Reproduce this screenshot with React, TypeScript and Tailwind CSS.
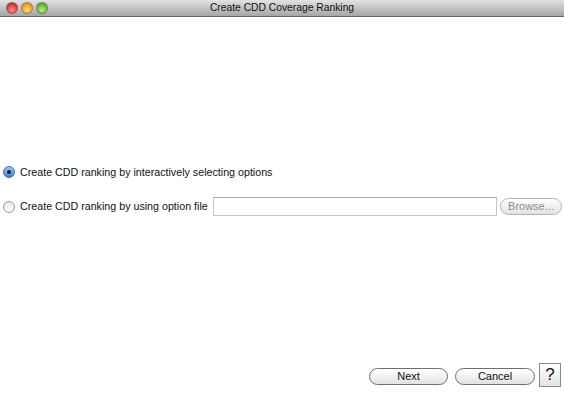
import React from 'react'

function Light({ from, to }: { from: string; to: string }) {
  return (
    <div
      className="w-[12px] h-[12px] rounded-full border border-[#6b6b6b]/60"
      style={{ background: `radial-gradient(circle at 50% 70%, ${from}, ${to})` }}
    />
  )
}

function Radio({ checked }: { checked?: boolean }) {
  return checked ? (
    <div className="shrink-0 w-[12px] h-[12px] rounded-full border border-[#3f6fa8] bg-gradient-to-b from-[#a6c8ee] to-[#3d7fd0] flex items-center justify-center">
      <div className="w-[4px] h-[4px] rounded-full bg-[#16243a]" />
    </div>
  ) : (
    <div className="shrink-0 w-[12px] h-[12px] rounded-full border border-[#9a9a9a] bg-gradient-to-b from-[#e8e8e8] to-[#fdfdfd]" />
  )
}

function PillButton({ label, className, disabled }: { label: string; className: string; disabled?: boolean }) {
  return (
    <div
      className={`shrink-0 rounded-full border flex items-center justify-center text-[11px] bg-gradient-to-b from-white via-[#f1f1f1] to-[#e2e2e2] ${
        disabled ? 'border-[#b4b4b4] text-[#8c8c8c]' : 'border-[#6f6f6f] text-[#111]'
      } ${className}`}
    >
      {label}
    </div>
  )
}

export default function App() {
  return (
    <div
      className="w-[564px] h-[393px] bg-white flex flex-col overflow-hidden"
      style={{ fontFamily: '"Liberation Sans", Arial, sans-serif' }}
    >
      <div className="h-[17px] relative flex items-center bg-gradient-to-b from-[#e2e2e2] to-[#a6a6a6] border-b border-[#666]">
        <div className="flex items-center gap-[3px] pl-[6px]">
          <Light from="#ff8a8a" to="#c10d0d" />
          <Light from="#ffe07a" to="#d47c00" />
          <Light from="#b6f07a" to="#3d8f14" />
        </div>
        <div className="absolute inset-0 flex items-center justify-center text-[10.3px] text-[#111]">
          Create CDD Coverage Ranking
        </div>
      </div>

      <div className="flex-1 flex flex-col">
        <div className="h-[147px]" />
        <div className="flex items-center gap-[5px] pl-[3px] h-[16px] text-[10.7px] text-[#111] whitespace-nowrap">
          <Radio checked />
          <span>Create CDD ranking by interactively selecting options</span>
        </div>
        <div className="h-[17px]" />
        <div className="flex items-center pl-[3px] h-[19px] text-[10.7px] text-[#111] whitespace-nowrap">
          <Radio />
          <span className="ml-[5px] w-[193px] shrink-0">Create CDD ranking by using option file</span>
          <div className="w-[284px] h-[19px] border border-[#c6c6c6] border-t-[#a9a9a9] bg-white shrink-0" />
          <PillButton label="Browse..." className="ml-[3px] w-[62px] h-[17px]" disabled />
        </div>
        <div className="flex-1" />
        <div className="flex items-end justify-end pr-[3px] pb-[6px]">
          <PillButton label="Next" className="w-[79px] h-[17px] mb-[2px]" />
          <PillButton label="Cancel" className="ml-[7px] w-[80px] h-[17px] mb-[2px]" />
          <div className="ml-[4px] w-[22px] h-[24px] border border-[#8a8a8a] bg-gradient-to-b from-white to-[#e4e4e4] flex items-center justify-center text-[17px] text-[#111]">
            ?
          </div>
        </div>
      </div>
    </div>
  )
}
